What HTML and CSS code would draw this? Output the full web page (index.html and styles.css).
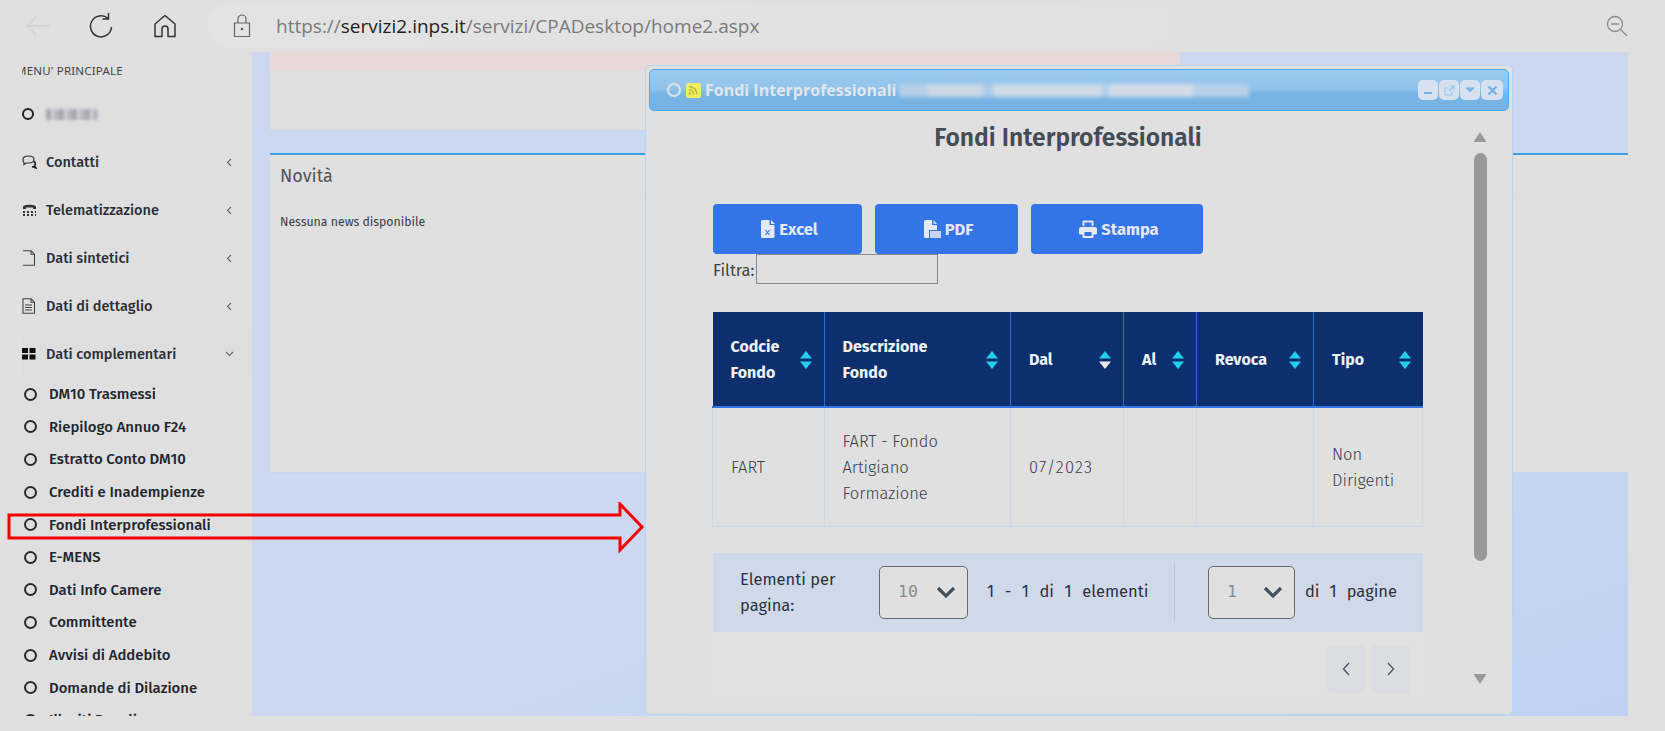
FILE: index.html
```html
<!DOCTYPE html>
<html lang="it">
<head>
<meta charset="utf-8">
<title>Fondi Interprofessionali</title>
<link rel="stylesheet" href="styles.css">
</head>
<body>
<header class="toolbar">
  <svg class="tb-back" width="26" height="22" viewBox="0 0 26 22"><path d="M25 11H2M11 2l-9 9 9 9" fill="none" stroke="#d2d2d2" stroke-width="1.4"/></svg>
  <svg class="tb-reload" width="26" height="28" viewBox="0 0 26 28"><path d="M20 6.5A10.5 10.500 0 1 0 23.500 15M20.500 1v6h-6" fill="none" stroke="#333" stroke-width="1.5"/></svg>
  <svg class="tb-home" width="24" height="24" viewBox="0 0 24 24"><path d="M12 1.500L2 10v12.500h7V15a3 3 0 0 1 6 0v7.500h7V10z" fill="none" stroke="#333" stroke-width="1.500" stroke-linejoin="round"/></svg>
  <div class="address">
    <svg class="tb-lock" width="18" height="24" viewBox="0 0 18 24"><path d="M5 9V5a4 4 0 0 1 8 0v4M1.500 9h15v13.500h-15z" fill="none" stroke="#666" stroke-width="1.200"/><circle cx="9" cy="15" r="1.200" fill="#555"/></svg>
    <span class="url"><span class="url-dim">https://</span>servizi2.inps.it<span class="url-dim">/servizi/CPADesktop/home2.aspx</span></span>
  </div>
  <svg class="tb-zoom" width="22" height="22" viewBox="0 0 22 22"><circle cx="9" cy="9" r="7.500" fill="none" stroke="#8c8c8c" stroke-width="1.300"/><path d="M5 9h8" stroke="#999" stroke-width="1.800"/><path d="M14.500 14.500l6.500 6.500" stroke="#8c8c8c" stroke-width="1.300"/></svg>
</header>

<div class="page">
  <nav class="sidebar">
    <div class="menu-label">MENU' PRINCIPALE</div>
    <div class="menu-row">
      <svg class="ico-clip" width="15" height="14" viewBox="0 0 15 14"><circle cx="6" cy="7" r="5" fill="none" stroke="#222" stroke-width="2"/></svg>
      <span class="blur-name"></span>
    </div>
    <div class="menu-row">
      <svg class="ico-clip" width="15" height="14" viewBox="0 0 15 14"><path d="M1 4.500C1 2.500 3 1 6.500 1S12 2.500 12 4.500 10 8 6.500 8H4L2 9.500V8C1.500 7 1 6 1 4.500z" fill="none" stroke="#333" stroke-width="1.200"/><path d="M12 6.500c1.500 1 1.500 3 .5 4.500l1.500 2-4-1.500" fill="none" stroke="#222" stroke-width="1.600"/></svg>
      <span class="menu-text">Contatti</span>
      <svg class="chev" width="6" height="9" viewBox="0 0 6 9"><path d="M5 1L1.500 4.500 5 8" fill="none" stroke="#666" stroke-width="1.100"/></svg>
    </div>
    <div class="menu-row">
      <svg class="ico-clip" width="15" height="14" viewBox="0 0 15 14"><path d="M1 6V4c0-3 13-3 13 0v2h-3V4.500H4V6z" fill="#333"/><path d="M1 9h2M5 9h2M9 9h2M13 9h1M1 12h2M5 12h2M9 12h2M13 12h1" stroke="#333" stroke-width="2"/></svg>
      <span class="menu-text">Telematizzazione</span>
      <svg class="chev" width="6" height="9" viewBox="0 0 6 9"><path d="M5 1L1.500 4.500 5 8" fill="none" stroke="#666" stroke-width="1.100"/></svg>
    </div>
    <div class="menu-row">
      <svg class="ico-clip" width="15" height="16" viewBox="0 0 15 16"><path d="M1 .7h8l3.500 3.500v11H1M9 .7v3.500h3.500" fill="none" stroke="#444" stroke-width="1.100"/></svg>
      <span class="menu-text">Dati sintetici</span>
      <svg class="chev" width="6" height="9" viewBox="0 0 6 9"><path d="M5 1L1.500 4.500 5 8" fill="none" stroke="#666" stroke-width="1.100"/></svg>
    </div>
    <div class="menu-row">
      <svg class="ico-clip" width="15" height="16" viewBox="0 0 15 16"><path d="M1 .7h8l3.500 3.500v11H1zM9 .7v3.500h3.500" fill="none" stroke="#444" stroke-width="1.100"/><path d="M3 7h7M3 9.500h7M3 12h7" stroke="#444" stroke-width="1.100"/></svg>
      <span class="menu-text">Dati di dettaglio</span>
      <svg class="chev" width="6" height="9" viewBox="0 0 6 9"><path d="M5 1L1.500 4.500 5 8" fill="none" stroke="#666" stroke-width="1.100"/></svg>
    </div>
    <div class="menu-row menu-row-open">
      <svg class="ico-clip" width="15" height="14" viewBox="0 0 15 14"><path d="M0 1h6v5H0zM7.500 1H13.500v5H7.500zM0 7.500h6v5H0zM7.500 7.500H13.500v5H7.500z" fill="#111"/></svg>
      <span class="menu-text">Dati complementari</span>
      <svg class="chev-down" width="9" height="6" viewBox="0 0 9 6"><path d="M1 1l3.500 3.500L8 1" fill="none" stroke="#666" stroke-width="1.100"/></svg>
    </div>
    <ul class="sub-list">
      <li class="sub-item"><span class="ring"></span>DM10 Trasmessi</li>
      <li class="sub-item"><span class="ring"></span>Riepilogo Annuo F24</li>
      <li class="sub-item"><span class="ring"></span>Estratto Conto DM10</li>
      <li class="sub-item"><span class="ring"></span>Crediti e Inadempienze</li>
      <li class="sub-item"><span class="ring"></span>Fondi Interprofessionali</li>
      <li class="sub-item"><span class="ring"></span>E-MENS</li>
      <li class="sub-item"><span class="ring"></span>Dati Info Camere</li>
      <li class="sub-item"><span class="ring"></span>Committente</li>
      <li class="sub-item"><span class="ring"></span>Avvisi di Addebito</li>
      <li class="sub-item"><span class="ring"></span>Domande di Dilazione</li>
      <li class="sub-item"><span class="ring"></span>Illeciti Penali</li>
    </ul>
  </nav>

  <main class="content">
    <section class="alert-panel"><div class="alert-strip"></div></section>
    <section class="news-panel">
      <h2 class="news-title">Novità</h2>
      <p class="news-body">Nessuna news disponibile</p>
    </section>
  </main>

  <div class="modal">
    <div class="titlebar">
      <span class="tb-ring"></span>
      <span class="rss"><svg width="14" height="14" viewBox="0 0 14 14"><path d="M3 3.500a8 8 0 0 1 8 8M3 6.800a4.700 4.700 0 0 1 4.700 4.700" fill="none" stroke="#b5b53a" stroke-width="1.500"/><circle cx="3.800" cy="10.500" r="1.200" fill="#b5b53a"/></svg></span>
      <span class="win-title">Fondi Interprofessionali</span>
      <span class="blur-title"></span>
      <div class="win-btns">
        <span class="win-btn"><svg width="10" height="10" viewBox="0 0 10 10"><path d="M1 8h8" stroke="#78b2e4" stroke-width="2"/></svg></span>
        <span class="win-btn"><svg width="11" height="11" viewBox="0 0 11 11"><path d="M8 6.500V10H1V3h3.500M6 1h4v4M10 1L5 6" fill="none" stroke="#9cc6ea" stroke-width="1.100"/></svg></span>
        <span class="win-btn"><svg width="10" height="6" viewBox="0 0 10 6"><path d="M0 .5h10L5 5.500z" fill="#78b2e4"/></svg></span>
        <span class="win-btn win-btn-close"><svg width="11" height="11" viewBox="0 0 11 11"><path d="M1.500 1.500l8 8M9.500 1.500l-8 8" stroke="#78b2e4" stroke-width="2.400"/></svg></span>
      </div>
    </div>
    <div class="modal-body">
      <div class="modal-main">
        <h1 class="modal-heading">Fondi Interprofessionali</h1>
        <div class="actions">
          <button class="action action-excel"><svg width="14" height="18" viewBox="0 0 14 18"><path d="M1.500 0H8.500V5h5v11.500a1.500 1.500 0 0 1-1.500 1.500H1.500A1.500 1.500 0 0 1 0 16.500v-15A1.500 1.500 0 0 1 1.500 0zM10 0l4 4h-4z" fill="#e4e8f4"/><path d="M4.500 10l4 5M8.500 10l-4 5" stroke="#3374e6" stroke-width="1.100"/></svg>Excel</button>
          <button class="action action-pdf"><svg width="17" height="18" viewBox="0 0 17 18"><path d="M1.500 0H8V5h5v5H5v8H1.500A1.500 1.500 0 0 1 0 16.500v-15A1.500 1.500 0 0 1 1.500 0zM9.500 0L13 3.700H9.500z" fill="#e4e8f4"/><path d="M6 11h11v7H6z" fill="#c9d6f3"/></svg>PDF</button>
          <button class="action action-print"><svg width="18" height="18" viewBox="0 0 18 18"><path d="M3.500 6V1.500a1 1 0 0 1 1-1h9a1 1 0 0 1 1 1V6h-2V2.500h-7V6zM2 7h14a2 2 0 0 1 2 2v4.500a1 1 0 0 1-1 1h-2.500V17a1 1 0 0 1-1 1h-9a1 1 0 0 1-1-1v-2.500H1a1 1 0 0 1-1-1V9a2 2 0 0 1 2-2zm3.500 5v4h7v-4z" fill="#e4e8f4" fill-rule="evenodd"/></svg>Stampa</button>
        </div>
        <div class="filter"><label class="filter-label" for="filtro">Filtra:</label><input class="filter-input" id="filtro" type="text"></div>
        <table class="grid">
          <colgroup>
            <col class="c1"><col class="c2"><col class="c3"><col class="c4"><col class="c5"><col class="c6">
          </colgroup>
          <thead>
            <tr>
              <th><div class="th-in"><span>Codcie<br>Fondo</span><svg class="sort" width="12" height="18" viewBox="0 0 12 18"><path d="M6 0l6 7.500H0z" fill="#23cfee"/><path d="M6 18l6-7.500H0z" fill="#23cfee"/></svg></div></th>
              <th><div class="th-in"><span>Descrizione<br>Fondo</span><svg class="sort" width="12" height="18" viewBox="0 0 12 18"><path d="M6 0l6 7.500H0z" fill="#23cfee"/><path d="M6 18l6-7.500H0z" fill="#23cfee"/></svg></div></th>
              <th><div class="th-in"><span>Dal</span><svg class="sort" width="12" height="18" viewBox="0 0 12 18"><path d="M6 0l6 7.500H0z" fill="#23cfee"/><path d="M6 18l6-7.500H0z" fill="#e8e8e8"/></svg></div></th>
              <th><div class="th-in"><span>Al</span><svg class="sort" width="12" height="18" viewBox="0 0 12 18"><path d="M6 0l6 7.500H0z" fill="#23cfee"/><path d="M6 18l6-7.500H0z" fill="#23cfee"/></svg></div></th>
              <th><div class="th-in"><span>Revoca</span><svg class="sort" width="12" height="18" viewBox="0 0 12 18"><path d="M6 0l6 7.500H0z" fill="#23cfee"/><path d="M6 18l6-7.500H0z" fill="#23cfee"/></svg></div></th>
              <th><div class="th-in"><span>Tipo</span><svg class="sort" width="12" height="18" viewBox="0 0 12 18"><path d="M6 0l6 7.500H0z" fill="#23cfee"/><path d="M6 18l6-7.500H0z" fill="#23cfee"/></svg></div></th>
            </tr>
          </thead>
          <tbody>
            <tr>
              <td>FART</td>
              <td>FART - Fondo<br>Artigiano<br>Formazione</td>
              <td class="td-date">07/2023</td>
              <td></td>
              <td></td>
              <td>Non<br>Dirigenti</td>
            </tr>
          </tbody>
        </table>
        <div class="pager">
          <div class="pager-label">Elementi per<br>pagina:</div>
          <div class="fake-select fs-size"><span class="fs-val">10</span><svg width="20" height="13" viewBox="0 0 20 13"><path d="M2 2l8 8 8-8" fill="none" stroke="#46505c" stroke-width="3.200"/></svg></div>
          <div class="pager-info"><span>1</span><span>-</span><span>1</span><span>di</span><span>1</span><span>elementi</span></div>
          <div class="pager-sep"></div>
          <div class="fake-select fs-page"><span class="fs-val">1</span><svg width="20" height="13" viewBox="0 0 20 13"><path d="M2 2l8 8 8-8" fill="none" stroke="#46505c" stroke-width="3.200"/></svg></div>
          <div class="pager-pages"><span>di</span><span>1</span><span>pagine</span></div>
        </div>
        <div class="pager-nav">
          <span class="nav-btn"><svg width="8" height="14" viewBox="0 0 8 14"><path d="M7 1L1.500 7 7 13" fill="none" stroke="#46505c" stroke-width="1.300"/></svg></span>
          <span class="nav-btn"><svg width="8" height="14" viewBox="0 0 8 14"><path d="M1 1l5.500 6L1 13" fill="none" stroke="#46505c" stroke-width="1.300"/></svg></span>
        </div>
      </div>
      <div class="scrollbar">
        <svg width="14" height="10" viewBox="0 0 14 10"><path d="M7 0l6.500 10H.5z" fill="#999"/></svg>
        <div class="thumb"></div>
        <svg width="14" height="10" viewBox="0 0 14 10"><path d="M7 10L.5 0h13z" fill="#999"/></svg>
      </div>
    </div>
  </div>
</div>

<svg class="red-arrow" width="646" height="60" viewBox="0 0 646 60"><path d="M9 13H620V2L642 25 620 48V36H9z" fill="none" stroke="#f40000" stroke-width="3"/></svg>
</body>
</html>
```

FILE: styles.css
```css
* { box-sizing: border-box; }
html, body { margin: 0; height: 731px; overflow: hidden; background: #e0e0e0; }
body { position: relative; font-family: "Fira Sans", "Noto Sans", sans-serif; color: #333; }

.toolbar { height: 52px; display: flex; align-items: center; position: relative; }
.tb-back { margin-left: 25px; flex: none; }
.tb-reload { margin-left: 37px; flex: none; }
.tb-home { margin-left: 39px; flex: none; }
.address { margin-left: 30px; height: 42px; width: 1100px; border-radius: 21px 0 0 21px; background: linear-gradient(90deg, #e3e3e3, #e2e2e2 70%, #e0e0e0); display: flex; align-items: center; padding-left: 26px; }
.tb-lock { flex: none; }
.url { margin-left: 25px; font-family: "Open Sans", sans-serif; font-size: 19px; color: #222; white-space: nowrap; }
.url-dim { color: #7a7a7a; }
.tb-zoom { margin-left: auto; margin-right: 37px; flex: none; }

.page { position: relative; height: 664px; margin-left: 22px; margin-right: 37px; display: flex; overflow: hidden; }

.sidebar { width: 230px; flex: none; height: 664px; background: #dfdfe0; overflow: hidden; }
.menu-label { height: 38px; padding-top: 11px; line-height: 16px; font-family: "Noto Sans", sans-serif; font-size: 11.500px; letter-spacing: .2px; color: #444; margin-left: -6px; white-space: nowrap; }
.menu-row { height: 48px; display: flex; align-items: center; padding-right: 20px; }
.menu-row-open { height: 47px; background: #dedede; }
.menu-text { margin-left: 9px; font-size: 14.500px; font-weight: 500; color: #2b2f38; white-space: nowrap; }
.ico-clip { flex: none; }
.blur-name { margin-left: 9px; width: 52px; height: 11px; background: repeating-linear-gradient(90deg, #a8a8b0 0 5px, #d2d2d6 5px 8px, #b8b8be 8px 13px); filter: blur(1.500px); }
.chev { margin-left: auto; flex: none; }
.chev-down { margin-left: auto; margin-right: -2px; flex: none; }

.sub-list { list-style: none; margin: 1px 0 0; padding: 0; }
.sub-item { height: 32.6px; display: flex; align-items: center; padding-left: 2px; font-size: 14.900px; font-weight: 500; color: #22262e; white-space: nowrap; }
.ring { width: 13px; height: 13px; border: 2px solid #2a2a2a; border-radius: 50%; margin-right: 12px; flex: none; }

.content { flex: 1; min-width: 0; height: 664px; background: linear-gradient(160deg, #ccd8ef 60%, #bfd2f3); padding-left: 18px; }
.alert-panel { width: 910px; height: 79px; background: #e0e0e0; border-radius: 0 0 3px 3px; border-bottom: 1px solid #c5d5ee; }
.alert-strip { height: 19px; background: #e9d8d9; }
.news-panel { margin-top: 22px; height: 320px; background: #e0e0e0; border-top: 2px solid #3f9edb; border-bottom: 1px solid #c5d5ee; }
.news-title { margin: 0; height: 45px; padding-left: 10px; line-height: 42px; font-size: 18px; font-weight: 400; color: #555; border-bottom: 1px solid #dedede; }
.news-body { margin: 14px 0 0 10px; font-size: 12.300px; line-height: 16px; color: #3b3b44; }

.modal { position: absolute; left: 623px; top: 13px; width: 868px; height: 650px; background: #e0e0e0; border: 1px solid #b5d5f0; border-radius: 5px; }
.titlebar { margin: 3px 3px 0; height: 42px; border: 1px solid #52a8ee; border-radius: 5px; background: linear-gradient(180deg, #9ccaef, #92c3eb 45%, #78b5e4 60%, #74b2e3); display: flex; align-items: center; padding-left: 17px; color: #e2e6ec; }
.tb-ring { width: 14px; height: 14px; border: 2.500px solid #dde4ec; border-radius: 50%; flex: none; }
.rss { width: 15px; height: 15px; margin-left: 5px; background: #eeee62; border-radius: 2px; display: flex; flex: none; }
.win-title { margin-left: 4px; font-family: "Open Sans", sans-serif; font-weight: 700; font-size: 16px; white-space: nowrap; }
.blur-title { margin-left: 3px; width: 350px; height: 13px; background: linear-gradient(90deg, #b5cfe8 0 8%, #ccd8e6 8% 24%, #a9cbea 24% 27%, #cfdbe8 27% 58%, #add0ec 58% 60%, #d3dce8 60% 84%, #b7d0e8 84% 100%); filter: blur(2px); flex: none; }
.win-btns { margin-left: auto; margin-right: 5px; display: flex; gap: 1px; }
.win-btn { width: 20px; height: 20px; background: #d6e2f0; border-radius: 5px; display: flex; align-items: center; justify-content: center; }
.win-btn-close { width: 22px; }

.modal-body { display: flex; }
.modal-main { margin-left: 67px; width: 710px; padding-top: 12px; flex: none; }
.modal-heading { margin: 0 0 51px; height: 30px; line-height: 30px; text-align: center; font-size: 24.600px; font-weight: 600; color: #444c56; white-space: nowrap; }

.actions { display: flex; gap: 13px; height: 50px; }
.action { height: 50px; border: 0; border-radius: 4px; background: #3374e6; color: #e4e8f4; display: flex; align-items: center; justify-content: center; gap: 4px; font-family: inherit; font-size: 16.500px; font-weight: 700; padding: 0 0 0 4px; }
.action-excel { width: 149px; }
.action-pdf { width: 143px; }
.action-print { width: 172px; }

.filter { display: flex; align-items: center; height: 30px; }
.filter-label { width: 43px; padding-top: 3px; font-size: 16.400px; color: #444; white-space: nowrap; }
.filter-input { width: 182px; height: 30px; border: 1px solid #8a8a8a; background: #e0e0e0; padding: 0; }

.grid { margin: 28px 0 0 -1px; width: 710px; table-layout: fixed; border-collapse: collapse; font-size: 16px; line-height: 26px; }
.c1 { width: 111.500px; } .c2 { width: 186.500px; } .c3 { width: 113px; } .c4 { width: 73px; } .c5 { width: 117px; } .c6 { width: 109px; }
.grid th { height: 95px; padding: 2px 12px 0 18px; background: #0d2f6e; color: #eef1f6; text-align: left; font-weight: 700; border-left: 1px solid #2f6bd6; border-right: 1px solid #2f6bd6; border-bottom: 2px solid #3374e6; }
.grid th:first-child { border-left: 0; }
.grid th:last-child { border-right: 0; }
.th-in { display: flex; align-items: center; justify-content: space-between; }
.sort { flex: none; }
.grid td { height: 119px; padding: 2px 10px 0 18px; font-size: 16.500px; font-weight: 300; color: #3a3d4a; border: 1px solid #cbd8ec; }
.grid .td-date { letter-spacing: 1.200px; }

.pager { margin-top: 26px; height: 79px; background: #d0d9ea; display: flex; align-items: center; padding-left: 27px; font-size: 16.500px; line-height: 26px; color: #2c3140; }
.pager-label { width: 139px; padding-top: 2px; flex: none; }
.fake-select { height: 53px; border: 1px solid #666b72; border-radius: 5px; background: #e0e0e0; display: flex; align-items: center; flex: none; }
.fs-size { width: 89px; padding-left: 18px; gap: 18px; }
.fs-page { width: 87px; padding-left: 18px; gap: 22px; }
.fs-val { font-family: "DejaVu Sans Mono", monospace; font-size: 16.500px; color: #8a8a8a; width: 20px; white-space: nowrap; }
.fs-page .fs-val { width: 14px; }
.pager-info { margin-left: 19px; width: 187px; display: flex; gap: 10.500px; flex: none; white-space: nowrap; }
.pager-sep { width: 1px; height: 60px; background: #b8cbe4; flex: none; }
.fs-page { margin-left: 33px; }
.pager-pages { margin-left: 10px; display: flex; gap: 10px; white-space: nowrap; }
.pager-nav { height: 64px; background: #e1e1e1; display: flex; justify-content: flex-end; gap: 7px; padding: 13px 13px 3px 0; }
.nav-btn { width: 38px; height: 48px; background: #dcdde0; border-radius: 3px; display: flex; align-items: center; justify-content: center; }

.scrollbar { margin-left: 50px; margin-top: 21px; width: 14px; display: flex; flex-direction: column; align-items: center; flex: none; }
.thumb { width: 13px; height: 408px; margin: 11px 0 113px; background: #999; border-radius: 7px; }

.red-arrow { position: absolute; left: 0; top: 502px; }
```
